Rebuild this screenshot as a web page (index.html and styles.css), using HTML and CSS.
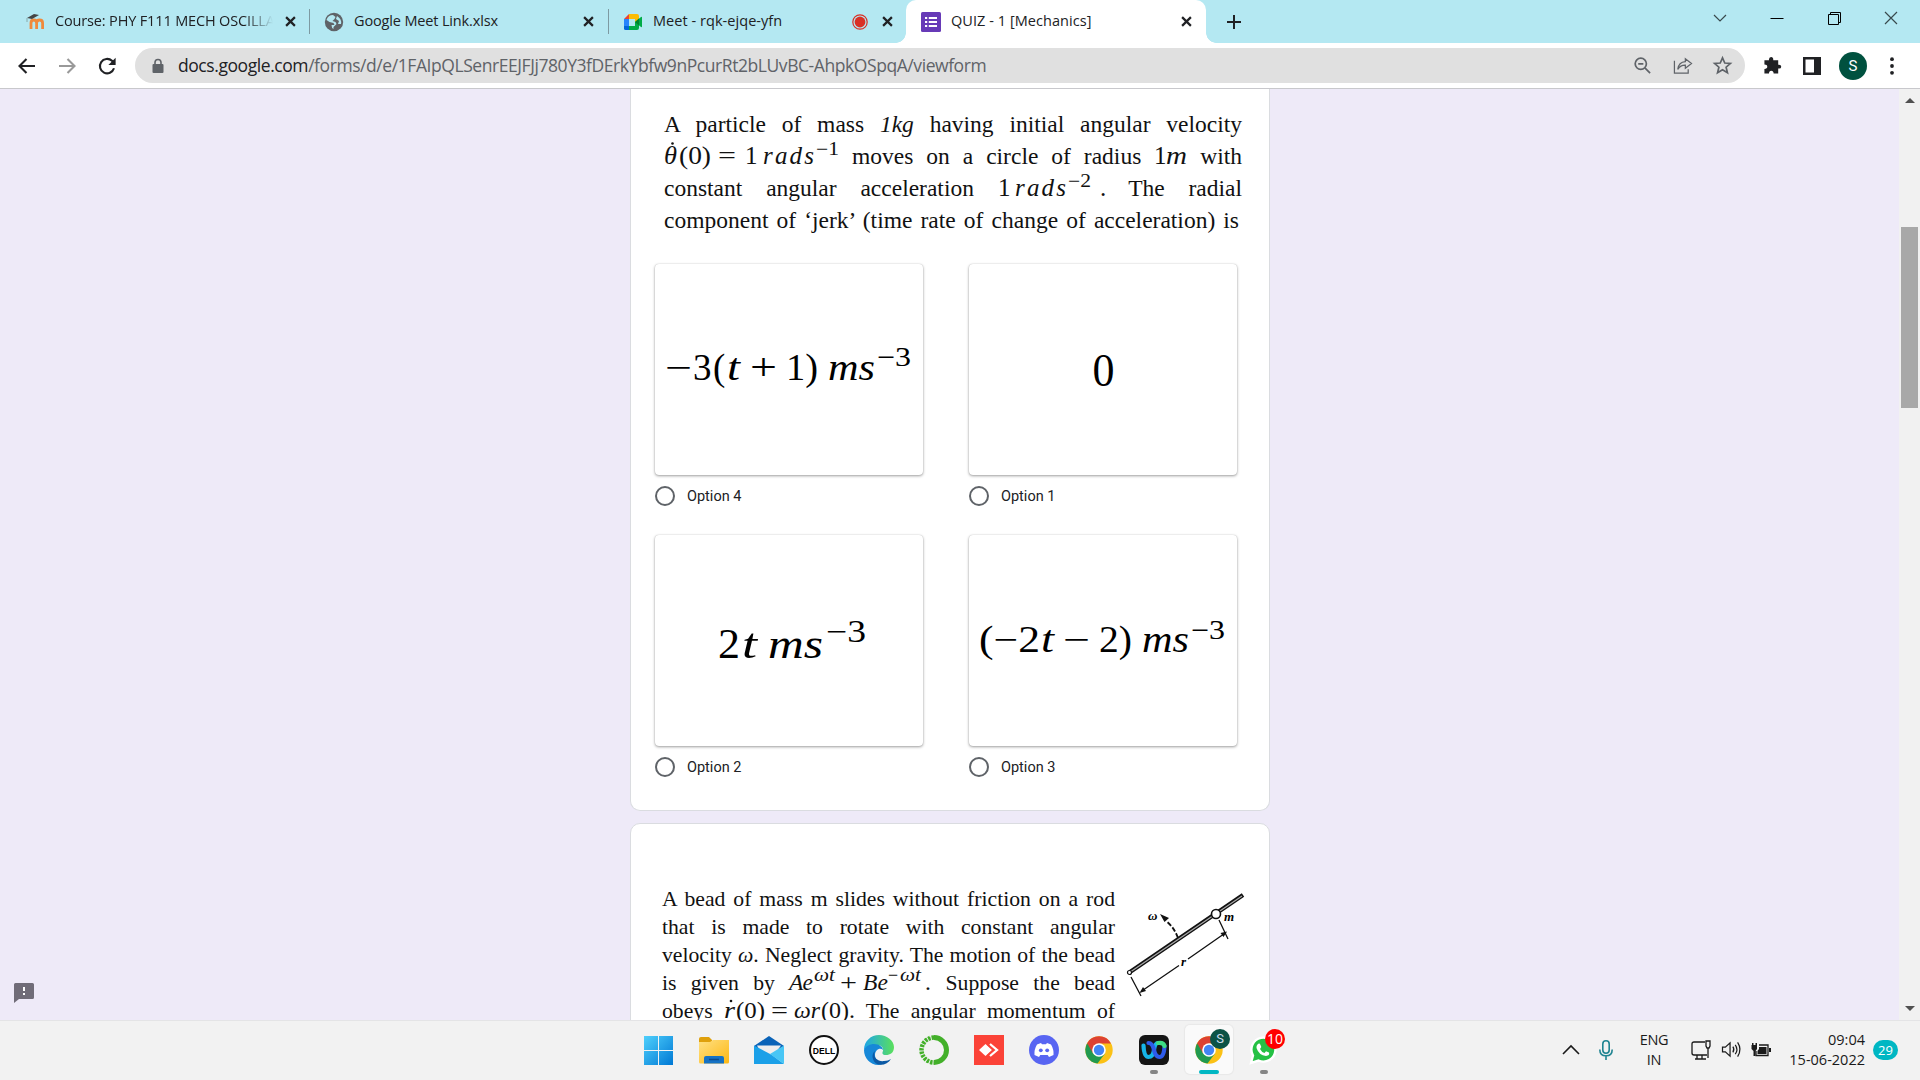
FILE: index.html
```html
<!DOCTYPE html>
<html lang="en">
<head>
<meta charset="utf-8">
<title>QUIZ - 1 [Mechanics]</title>
<link rel="stylesheet" href="styles.css">
</head>
<body>
<header class="tabs">
  <div class="tab t1">
    <svg class="fav" viewBox="0 0 20 20"><path d="M6 17v-6q0-3 2.800-3t2.800 3v6M11.600 17v-6q0-3 3-3t3 3v6" fill="none" stroke="#f08a3c" stroke-width="2.800"/><path d="M2 6l7-4 5 1-7 4z" fill="#444"/><path d="M2 6v4" stroke="#8aa" /></svg>
    <span class="tt fade">Course: PHY F111 MECH OSCILLA</span>
    <svg class="x" viewBox="0 0 10 10"><path d="M1 1l8 8M9 1l-8 8"/></svg>
  </div>
  <div class="tab t2">
    <svg class="fav" viewBox="0 0 20 20"><circle cx="10" cy="10" r="9.200" fill="#5f6368"/><path d="M9 3q-5 0-6.500 5l3 2 4 1 1 2-3 0q0 3 2 4v-2l3-3-1-2-3-1 2-2 1-2zM13 4l-1 3 3 2-1 3 3 0q1-5-4-8z" fill="#b4e8f2"/></svg>
    <span class="tt">Google Meet Link.xlsx</span>
    <svg class="x" viewBox="0 0 10 10"><path d="M1 1l8 8M9 1l-8 8"/></svg>
  </div>
  <div class="tab t3">
    <svg class="fav" viewBox="0 0 20 20"><path d="M1 7l5-5v5z" fill="#ea4335"/><path d="M6 2h8q2 0 2 2v5l-4 1V7H6z" fill="#fbbc04"/><path d="M1 7h5v7H1z" fill="#2684fc"/><path d="M1 14h5v4H2.500Q1 18 1 16.500z" fill="#0066da"/><path d="M6 14h6v-4l4 1v5q0 2-2 2H6zM12 10l6-5q1-.6 1 .5v9q0 1-1 .5z" fill="#00ac47"/><path d="M12 10l4-3.400v6.800z" fill="#00832d"/></svg>
    <span class="tt">Meet - rqk-ejqe-yfn</span>
    <svg class="rec" viewBox="0 0 16 16"><circle cx="8" cy="8" r="7.200" fill="none" stroke="#d93025" stroke-width="1.200"/><circle cx="8" cy="8" r="5.400" fill="#d93025"/></svg>
    <svg class="x" viewBox="0 0 10 10"><path d="M1 1l8 8M9 1l-8 8"/></svg>
  </div>
  <div class="tab active">
    <svg class="fav" viewBox="0 0 20 20"><rect width="20" height="20" rx="1.500" fill="#673ab7"/><path d="M4 6h2.200M4 10h2.200M4 14h2.200M7.800 6H16M7.800 10H16M7.800 14H16" stroke="#fff" stroke-width="2.200"/></svg>
    <span class="tt">QUIZ - 1 [Mechanics]</span>
    <svg class="x" viewBox="0 0 10 10"><path d="M1 1l8 8M9 1l-8 8"/></svg>
  </div>
  <svg class="plus" viewBox="0 0 16 16"><path d="M8 1v14M1 8h14"/></svg>
  <div class="win">
    <svg viewBox="0 0 14 14"><path d="M1 4l6 6 6-6"/></svg>
    <svg viewBox="0 0 14 14"><path class="dk" d="M.5 7.500h13"/></svg>
    <svg viewBox="0 0 14 14"><path class="dk" d="M1.500 3.500h10v10h-10zM3.500 3.500v-2h10v10h-2"/></svg>
    <svg viewBox="0 0 14 14"><path d="M1 1l12 12M13 1L1 13"/></svg>
  </div>
</header>
<nav class="bar">
  <svg class="nav" viewBox="0 0 20 20"><path d="M18 10H3M9.500 3L2.500 10l7 7"/></svg>
  <svg class="nav off" viewBox="0 0 20 20"><path d="M2 10h15M10.500 3l7 7-7 7"/></svg>
  <svg class="nav" viewBox="0 0 20 20"><path d="M17 12.300A7.200 7.200 0 1 1 15 4.800L17 7"/><path d="M18.600 1.800v7.200h-7.200z" fill="#202124" class="tip"/></svg>
  <div class="omni">
    <svg class="lock" viewBox="0 0 12 14"><rect x=".5" y="5" width="11" height="9" rx="1" fill="#5f6368"/><path d="M3 6V3.500a3 3 0 0 1 6 0V6" fill="none" stroke="#5f6368" stroke-width="1.600"/></svg>
    <span class="url"><b>docs.google.com</b>/forms/d/e/1FAIpQLSenrEEJFJj780Y3fDErkYbfw9nPcurRt2bLUvBC-AhpkOSpqA/viewform</span>
    <svg class="oi" viewBox="0 0 20 20"><circle cx="8.200" cy="8.200" r="5.900"/><path d="M12.500 12.500l5.500 5.500M5.500 8.200h5.400"/></svg>
    <svg class="oi thin" viewBox="0 0 20 20"><path d="M1.500 5v13h14.500v-4"/><path d="M5 14q1-7.500 8-8V2.800L19.500 8 13 13V9.700Q8 9.500 5 14z"/></svg>
    <svg class="oi" viewBox="0 0 20 20"><path d="M10 2l2.400 5.400 5.900.5-4.500 3.900 1.400 5.800-5.200-3.100-5.200 3.100 1.400-5.800-4.500-3.900 5.900-.5z" stroke-width="1.700"/></svg>
  </div>
  <svg class="ext" viewBox="0 0 20 20"><path d="M1.500 4.500H6.300Q6 1 8.500 1T10.800 4.500H16V9.200q3.200-.4 3.200 2T16 13.200V18.500H11.200Q11 15.500 8.700 15.500T6.300 18.500H1.500V13.600Q4.500 13.400 4.500 11.200T1.500 9z" fill="#202124"/></svg>
  <svg class="side" viewBox="0 0 18 18"><path d="M0 0h18v18H0zM2.500 2.500v13h8.500v-13z" fill="#202124" fill-rule="evenodd"/></svg>
  <span class="ava">S</span>
  <svg class="dots" viewBox="0 0 4 18"><circle cx="2" cy="2.200" r="1.900"/><circle cx="2" cy="9" r="1.900"/><circle cx="2" cy="15.800" r="1.900"/></svg>
</nav>
<main class="page">
  <aside class="left"><svg class="fb" viewBox="0 0 20 20"><path d="M1.500 0h17Q20 0 20 1.500v13q0 1.500-1.500 1.500H5l-5 4V1.500Q0 0 1.500 0z" fill="#706c78"/><path d="M9 4h2v4H9zM9 10h2v2H9z" fill="#fff"/></svg></aside>
  <div class="form">
    <section class="card first">
      <div class="q q1">
        <p>A particle of mass <i>1kg</i> having initial angular velocity</p>
        <p><svg class="m" width="175" height="20"><text class="i" x="0" y="20" textLength="13" lengthAdjust="spacingAndGlyphs">θ</text><circle cx="8.500" cy="-.5" r="1.300"/><text x="15" y="20" textLength="32" lengthAdjust="spacingAndGlyphs">(0)</text><text x="54" y="20" textLength="18" lengthAdjust="spacingAndGlyphs">=</text><text x="81" y="20">1</text><text class="i" x="99" y="20" textLength="51">rads</text><text class="u" x="152" y="11" textLength="23" lengthAdjust="spacingAndGlyphs">−1</text></svg> moves on a circle of radius <svg class="m" width="33" height="20"><text x="0" y="20">1</text><text class="i" x="12" y="20" textLength="21" lengthAdjust="spacingAndGlyphs">m</text></svg> with</p>
        <p>constant angular acceleration <svg class="m" width="107" height="20"><text x="0" y="20">1</text><text class="i" x="17" y="20" textLength="51">rads</text><text class="u" x="70" y="11" textLength="23" lengthAdjust="spacingAndGlyphs">−2</text><text x="102" y="20">.</text></svg> The radial</p>
        <p class="end">component of ‘jerk’ (time rate of change of acceleration) is</p>
      </div>
      <div class="opts">
        <div class="opt"><div class="pic"><svg viewBox="0 0 268 212"><text x="10" y="116" textLength="27" lengthAdjust="spacingAndGlyphs">−</text><text x="38" y="116">3</text><text x="58" y="116">(</text><text class="i" x="72" y="116" textLength="13" lengthAdjust="spacingAndGlyphs">t</text><text x="95" y="116" textLength="27" lengthAdjust="spacingAndGlyphs">+</text><text x="131" y="116" textLength="32" lengthAdjust="spacingAndGlyphs">1)</text><text class="i" x="173" y="116" textLength="47" lengthAdjust="spacingAndGlyphs">ms</text><text class="sp" x="222" y="102" textLength="34" lengthAdjust="spacingAndGlyphs">−3</text></svg></div><label><span class="radio"></span>Option 4</label></div>
        <div class="opt"><div class="pic"><svg viewBox="0 0 268 212"><text class="zero" x="123.500" y="122" textLength="22" lengthAdjust="spacingAndGlyphs">0</text></svg></div><label><span class="radio"></span>Option 1</label></div>
        <div class="opt"><div class="pic"><svg viewBox="0 0 268 212"><text class="big" x="63" y="123" textLength="22" lengthAdjust="spacingAndGlyphs">2</text><text class="big i" x="87" y="123" textLength="15" lengthAdjust="spacingAndGlyphs">t</text><text class="big i" x="113" y="123" textLength="55" lengthAdjust="spacingAndGlyphs">ms</text><text class="sp b2" x="171" y="107" textLength="40" lengthAdjust="spacingAndGlyphs">−3</text></svg></div><label><span class="radio"></span>Option 2</label></div>
        <div class="opt"><div class="pic"><svg viewBox="0 0 268 212"><text x="10" y="117" textLength="61" lengthAdjust="spacingAndGlyphs">(−2</text><text class="i" x="72" y="117" textLength="13" lengthAdjust="spacingAndGlyphs">t</text><text x="94" y="117" textLength="27" lengthAdjust="spacingAndGlyphs">−</text><text x="130" y="117" textLength="33" lengthAdjust="spacingAndGlyphs">2)</text><text class="i" x="173" y="117" textLength="47" lengthAdjust="spacingAndGlyphs">ms</text><text class="sp" x="222" y="104" textLength="34" lengthAdjust="spacingAndGlyphs">−3</text></svg></div><label><span class="radio"></span>Option 3</label></div>
      </div>
    </section>
    <section class="card second">
      <div class="q q2">
        <p>A bead of mass m slides without friction on a rod</p>
        <p>that is made to rotate with constant angular</p>
        <p>velocity <i>ω</i>. Neglect gravity. The motion of the bead</p>
        <p>is given by <svg class="m" width="142" height="20"><text class="i" x="0" y="20" textLength="24">Ae</text><text class="i u" x="25" y="11" textLength="21" lengthAdjust="spacingAndGlyphs">ωt</text><text x="51" y="20" textLength="17" lengthAdjust="spacingAndGlyphs">+</text><text class="i" x="74" y="20" textLength="25">Be</text><text class="u" x="99" y="11">−</text><text class="i u" x="111" y="11" textLength="21" lengthAdjust="spacingAndGlyphs">ωt</text><text x="136" y="20">.</text></svg> Suppose the bead</p>
        <p>obeys <svg class="m" width="131" height="20"><text class="i" x="0" y="20" textLength="11" lengthAdjust="spacingAndGlyphs">r</text><circle cx="7" cy="3" r="1.300"/><text x="12" y="20" textLength="29" lengthAdjust="spacingAndGlyphs">(0)</text><text x="47" y="20" textLength="17" lengthAdjust="spacingAndGlyphs">=</text><text class="i" x="70" y="20" textLength="26" lengthAdjust="spacingAndGlyphs">ωr</text><text x="97" y="20" textLength="34" lengthAdjust="spacingAndGlyphs">(0).</text></svg> The angular momentum of</p>
      </div>
      <svg class="rod" viewBox="0 0 124 106">
        <path d="M5 80L118 3" stroke="#111" stroke-width="4.200"/><path d="M6 79.500L117 4" stroke="#aaa" stroke-width="1.200"/>
        <circle cx="4.500" cy="80.500" r="2" fill="#fff" stroke="#111" stroke-width="1.200"/>
        <circle cx="91" cy="22" r="4.500" fill="#fff" stroke="#111" stroke-width="1.600"/>
        <path d="M6 85l10 19M94 28l9 19M16 99.500l38-26M63 67l38-26.500" stroke="#111" stroke-width="1.300"/>
        <path d="M14.500 101l3.500-6 3 4zM102 39.500l-6.500 1.500 3 4z" fill="#111"/>
        <path d="M53 46q-4-11-12-17" stroke="#111" stroke-width="1.800" stroke-dasharray="5 2" fill="none"/><path d="M35 22l9 4-4.500 4z" fill="#111"/>
        <text x="23" y="28">ω</text><text x="99" y="29">m</text><text x="56" y="74">r</text>
      </svg>
    </section>
  </div>
  <div class="scroll"><svg viewBox="0 0 10 5"><path d="M0 5L5 0l5 5z"/></svg><span class="thumb"></span><svg class="dn" viewBox="0 0 10 5"><path d="M0 0l5 5 5-5z"/></svg></div>
</main>
<footer class="task">
  <div class="apps">
    <span class="app"><svg viewBox="0 0 30 30"><defs><linearGradient id="w" x2="1" y2="1"><stop stop-color="#4fd0fc"/><stop offset="1" stop-color="#0078d4"/></linearGradient><linearGradient id="f" x2="1" y2="1"><stop stop-color="#ffe083"/><stop offset="1" stop-color="#fdb813"/></linearGradient><linearGradient id="e" x2="1"><stop stop-color="#1ea5e8"/><stop offset="1" stop-color="#5be05c"/></linearGradient></defs><path d="M0 1h14v14H0zM15 1h14v14H15zM0 16h14v14H0zM15 16h14v14H15z" fill="url(#w)"/></svg></span>
    <span class="app"><svg viewBox="0 0 30 30"><path d="M0 4q0-2 2-2h8l3 3v6H0z" fill="#dfa00c"/><path d="M0 7h11l3-2h16v22q0 1.500-1.500 1.500h-27Q0 28.500 0 27z" fill="url(#f)"/><path d="M5 28.500v-5.500q0-2 2-2h16q2 0 2 2v5.500z" fill="#1672c4"/><path d="M10 24.500h10" stroke="#0b4a8c" stroke-width="1.500"/></svg></span>
    <span class="app"><svg viewBox="0 0 30 30"><path d="M0 11L15 1l15 10v4H0z" fill="#0a63b8"/><path d="M3 10.500h24L20 20H8z" fill="#eee"/><path d="M0 10.500L18 20l12 9H0z" fill="#1ba0e8"/><path d="M30 10.500L16 19l14 10z" fill="#48c6f5"/></svg></span>
    <span class="app"><svg viewBox="0 0 30 30"><circle cx="15" cy="15" r="14" fill="#fff" stroke="#111" stroke-width="2"/><text class="dell" x="3.800" y="18.600" textLength="22.500" lengthAdjust="spacingAndGlyphs">DELL</text></svg></span>
    <span class="app"><svg viewBox="0 0 30 30"><path d="M0 15C0 6 7 0 15 0s15 6 15 12c0 6-4 8-8 8-4 0-4-2-3-4 1-4-3-6-6-6C7 10 2 13 0 15z" fill="url(#e)"/><path d="M0 15c2-4 6-6 10-6 5 0 9 3 9 6-3-3-8 0-8 5 0 4 3 8 7 9.500C8 32 0 24 0 15z" fill="#1788d8"/><path d="M11 16c-3 7 4 11 9 10 3 0 5-1 7-2-3 5-9 7-14 5-5-3-6-10-2-13z" fill="#0c59a4"/></svg></span>
    <span class="app"><svg viewBox="0 0 30 30"><path d="M15 2.500a12.500 12.500 0 0 1 0 25" fill="none" stroke="#43b02a" stroke-width="5"/><path d="M15 2.500a12.500 12.500 0 0 0 0 25" fill="none" stroke="#43b02a" stroke-width="4.500" stroke-dasharray="2.500 1"/><path d="M12 1a14 14 0 0 0 0 28" fill="none" stroke="#f2f2f2" stroke-width="1" stroke-dasharray="2 2"/></svg></span>
    <span class="app"><svg viewBox="0 0 30 30"><path d="M0 0h30v30H0z" fill="#fb4338"/><path d="M5 15l6.500-6 6.500 6-6.500 6z" fill="#fff"/><path d="M16 9l7 6-7 6" fill="none" stroke="#fff" stroke-width="2.300"/><path d="M13.500 9.500l6 5.500-6 5.500" fill="none" stroke="#fb4338" stroke-width="1.500"/></svg></span>
    <span class="app"><svg viewBox="0 0 30 30"><circle cx="15" cy="15" r="15" fill="#5865f2"/><path d="M8 9.500l4-1.500 1 1.300h4L18 8l4 1.500q3 5 2.500 10.500l-4.500 2-1.300-2h-7.400L10 22l-4.500-2Q5 14.500 8 9.500z" fill="#fff"/><circle cx="11.800" cy="15.300" r="1.900" fill="#5865f2"/><circle cx="18.200" cy="15.300" r="1.900" fill="#5865f2"/></svg></span>
    <span class="app"><svg viewBox="0 0 30 30"><g id="chrome"><circle cx="15" cy="15" r="13.700" fill="#fbc116"/><path d="M15 15L3.140 8.150A13.700 13.700 0 0 0 13.500 28.600L21 18.500z" fill="#219a50"/><path d="M3.140 8.150A13.700 13.700 0 0 1 27 8.500H15l-6.200 9.500z" fill="#dd4132"/><circle cx="15" cy="15" r="6.800" fill="#fff"/><circle cx="15" cy="15" r="5.200" fill="#4285f4"/></g></svg></span>
    <span class="app"><svg viewBox="0 0 30 30"><rect width="30" height="30" rx="6" fill="#151515"/><path d="M4.500 10.500q.5 11.500 5 11.500t5.500-7 4-7" fill="none" stroke="#16b5e8" stroke-width="4.200" stroke-linecap="round"/><path d="M9.500 8q4 0 5.500 7t5.500 7q4.500 0 5-11" fill="none" stroke="#2e5bea" stroke-width="4.200" stroke-linecap="round"/><path d="M19 8q5.500-1 6.500 3" fill="none" stroke="#3ddc84" stroke-width="4.200" stroke-linecap="round"/></svg><em></em></span>
    <span class="app on"><svg viewBox="0 0 30 30"><use href="#chrome"/></svg><b class="bdg s">S</b><em></em></span>
    <span class="app"><svg viewBox="0 0 30 30"><path d="M2 28l2-7.500A12 12 0 1 1 9.500 25.500z" fill="#25c144" stroke="#fff" stroke-width="2.400"/><path d="M8.500 9.500q2-2 3 .5l.8 2-1.300 2q1.500 3 4.500 4l1.500-1.800 3 1.300q1 3-3 3.500-7-.5-9.500-8-.3-2.500 1-3.500z" fill="#fff"/></svg><b class="bdg n">10</b><em></em></span>
  </div>
  <div class="tray">
    <svg class="up" viewBox="0 0 18 10"><path d="M1 9l8-8 8 8" fill="none" stroke="#1a1a1a" stroke-width="1.600"/></svg>
    <svg class="mic" viewBox="0 0 14 20"><rect x="3.800" y=".8" width="6.400" height="12.400" rx="3.200"/><path d="M.8 9.500q0 6.300 6.200 6.300t6.200-6.300M7 16v4"/></svg>
    <div class="lang">ENG<br>IN</div>
    <svg class="net" viewBox="0 0 20 20"><path d="M14 2H3Q1 2 1 4v9q0 2 2 2h13M6 15v4M11 15v4M4 19h11M15 1h4v5l-1 2h-2l-1-2zM17 8v10"/></svg>
    <svg class="vol" viewBox="0 0 20 18"><path d="M1 6.500h3L9 2v14l-5-4.500H1zM12 6q2 3 0 6M14.500 4q3.500 5 0 10M17 1.500q5 7.500 0 15"/></svg>
    <svg class="bat" viewBox="0 0 20 16"><path d="M8 3h9v10.500H5V9" fill="none" stroke="#1a1a1a" stroke-width="1.300"/><path d="M8 5h7.500v7H6.500V9l1.500-2zM18 6h2v4h-2zM1 1h1.500v2h2V1H6v6L4.500 9v5h-2V9L.5 7V3H1z" fill="#1a1a1a"/></svg>
    <div class="clock">09:04<br>15-06-2022</div>
    <span class="cnt">29</span>
  </div>
</footer>
</body>
</html>
```
FILE: styles.css
```css
* { box-sizing: border-box; }
body { margin: 0; width: 1920px; height: 1080px; overflow: hidden; display: flex; flex-direction: column; font-family: "Open Sans", "Noto Sans", sans-serif; color: #202124; }
svg { display: block; flex: none; overflow: visible; }

/* tab strip */
.tabs { height: 43px; flex: none; background: #b4e8f2; display: flex; align-items: center; }
.tab { height: 43px; display: flex; align-items: center; position: relative; font-size: 14.500px; }
.t1 { width: 310px; padding: 0 14px 0 25px; }
.t2 { width: 299px; padding: 0 15px 0 14px; }
.t3 { width: 297px; padding: 0 13px 0 14px; }
.active { width: 300px; padding: 0 14px 0 15px; background: #fff; border-radius: 10px 10px 0 0; }
.t1::after, .t2::after { content: ""; position: absolute; right: 0; top: 9px; width: 1px; height: 25px; background: #7d9aa2; }
.active::before, .active::after { content: ""; position: absolute; bottom: 0; width: 10px; height: 10px; }
.active::before { left: -10px; background: radial-gradient(circle at 0 0, #b4e8f2 9.500px, #fff 10px); }
.active::after { right: -10px; background: radial-gradient(circle at 100% 0, #b4e8f2 9.500px, #fff 10px); }
.fav { width: 20px; height: 20px; margin-right: 10px; }
.tt { flex: 1; white-space: nowrap; overflow: hidden; letter-spacing: -.15px; padding-bottom: 2px; }
.t3 .tt, .active .tt { letter-spacing: .05px; }
.fade { flex: 0 0 218px; margin-right: auto; -webkit-mask-image: linear-gradient(90deg, #000 190px, transparent 218px); mask-image: linear-gradient(90deg, #000 190px, transparent 218px); }
.x { width: 11px; height: 11px; }
.x path, .plus path { stroke: #202124; stroke-width: 2; fill: none; }
.rec { width: 16px; height: 16px; margin-right: 14px; }
.plus { width: 16px; height: 16px; margin-left: 20px; }
.win { margin-left: auto; display: flex; gap: 43px; padding: 0 22px 7px 0; }
.win svg { width: 14px; height: 14px; }
.win path { fill: none; stroke: #39494d; stroke-width: 1.200; }
.win .dk { stroke: #000; stroke-width: 1; }

/* toolbar */
.bar { height: 46px; flex: none; background: #fff; border-bottom: 1px solid #c8c8cc; display: flex; align-items: center; padding-left: 17px; }
.nav { width: 20px; height: 20px; margin-right: 20px; }
.nav path { fill: none; stroke: #202124; stroke-width: 2.100; }
.nav .tip { fill: #202124; stroke: none; }
.off path { stroke: #999; }
.omni { width: 1610px; height: 35px; border-radius: 18px; background: #e0e0e0; display: flex; align-items: center; padding: 0 13px 0 17px; margin-left: -2px; }
.lock { width: 12px; height: 14px; margin-right: 14px; }
.url { flex: 1; font-size: 17.500px; color: #5f6368; white-space: nowrap; letter-spacing: -.43px; padding-bottom: 1px; }
.url b { font-weight: 400; color: #202124; }
.oi { width: 19px; height: 19px; margin-left: 21px; }
.oi path, .oi circle { fill: none; stroke: #5f6368; stroke-width: 1.800; }
.thin path { stroke-width: 1.300; }
.ext { width: 19px; height: 19px; margin-left: 18px; }
.side { width: 18px; height: 18px; margin-left: 21px; }
.ava { width: 28px; height: 28px; border-radius: 50%; background: #00513f; color: #fff; font: 15px/28px Roboto, sans-serif; text-align: center; margin-left: 18px; }
.dots { width: 4px; height: 18px; margin-left: 23px; fill: #202124; }

/* page */
.page { flex: 1; min-height: 0; background: #eeeaf8; display: flex; overflow: hidden; }
.left { width: 630px; display: flex; align-items: flex-end; padding: 0 0 17px 14px; }
.fb { width: 20px; height: 20px; }
.form { width: 640px; margin-right: auto; }
.card { background: #fff; border: 1px solid #dadce0; border-radius: 10px; }
.first { height: 722px; border-top: 0; border-radius: 0 0 10px 10px; padding: 19px 22px 0 24px; }
.second { height: 400px; margin-top: 12px; padding: 61px 10px 0 31px; display: flex; }
.q { font-family: "Liberation Serif", serif; color: #111; }
.q p { margin: 0; text-align: justify; text-align-last: justify; white-space: nowrap; }
.q1 { width: 578px; margin: 0 0 0 9px; font-size: 23.500px; }
.q1 p { height: 32px; line-height: 32px; }
.q1 .end { width: 575px; }
.q2 { width: 453px; flex: none; font-size: 21.700px; }
.q2 p { height: 28px; line-height: 28px; }
.m { display: inline-block; vertical-align: baseline; font-size: 25px; fill: #111; }
.q2 .m { font-size: 23.500px; }
.m .i { font-style: italic; }
.m .u { font-size: 18px; }
.opts { display: grid; grid-template-columns: 268px 268px; column-gap: 46px; row-gap: 59px; margin-top: 28px; }
.opt { height: 212px; }
.pic { height: 211px; border-radius: 4px; box-shadow: 0 1px 3px rgba(0,0,0,.38), 0 0 1px rgba(0,0,0,.2); font: 37px "Liberation Serif", serif; }
.pic .i { font-style: italic; }
.pic .sp { font-size: 27px; }
.pic .big { font-size: 43px; }
.pic .zero { font-size: 47px; }
.pic .b2 { font-size: 31px; }
.opt label { display: flex; align-items: center; gap: 12px; height: 20px; margin-top: 11px; font: 14.500px Roboto, sans-serif; color: #202124; }
.radio { width: 20px; height: 20px; border: 2px solid #5f6368; border-radius: 50%; }
.rod { width: 124px; height: 106px; margin: 7px 0 0 10px; font: italic bold 13px "Liberation Serif", serif; }
.scroll { width: 21px; background: #f1f1f1; display: flex; flex-direction: column; align-items: center; padding: 9px 0 9px; }
.scroll svg { width: 10px; height: 5px; fill: #505050; }
.thumb { width: 17px; height: 181px; background: #a8a8a8; margin-top: 124px; }
.dn { margin-top: auto; }

/* taskbar */
.task { height: 60px; flex: none; background: #f2f2f2; border-top: 1px solid #e4e4e6; display: flex; }
.apps { display: flex; margin-left: 635px; gap: 7px; padding-top: 4px; }
.app { width: 48px; height: 49px; padding: 10px 9px; border-radius: 5px; position: relative; }
.app svg { width: 30px; height: 30px; }
.on { background: #fafafa; box-shadow: 0 0 1px 1px #e8e8e8; }
.app em { position: absolute; left: 20px; bottom: 0; width: 8px; height: 4px; border-radius: 2px; background: #858585; }
.on em { left: 14px; width: 20px; background: #00b7c3; }
.dell { font: bold 9px "Liberation Sans", sans-serif; }
.bdg { position: absolute; top: 4px; left: 24px; width: 20px; height: 20px; border-radius: 50%; text-align: center; color: #fff; }
.bdg.s { background: #0b5345; font: 13px/20px Roboto, sans-serif; color: #cde; left: 25px; }
.bdg.n { background: #f00; left: 25px; font: 14px/20px "Open Sans", sans-serif; }
.tray { margin-left: auto; display: flex; align-items: center; font-size: 14.500px; line-height: 20px; color: #1a1a1a; padding: 0 22px 2px 0; }
.up { width: 18px; height: 10px; margin-right: 19px; }
.mic { width: 14px; height: 20px; margin-right: 26px; fill: none; stroke: #1f8491; stroke-width: 1.600; }
.lang { width: 30px; text-align: center; margin-right: 22px; letter-spacing: -.3px; }
.net { width: 20px; height: 20px; margin-right: 10px; }
.vol { width: 20px; height: 17px; margin-right: 10px; }
.net, .vol { fill: none; stroke: #1a1a1a; stroke-width: 1.300; }
.bat { width: 20px; height: 16px; }
.clock { width: 94px; text-align: right; white-space: nowrap; }
.cnt { width: 25px; height: 20px; border-radius: 10px; background: #00b7c3; color: #fff; text-align: center; font-size: 13px; margin-left: 8px; }
```
